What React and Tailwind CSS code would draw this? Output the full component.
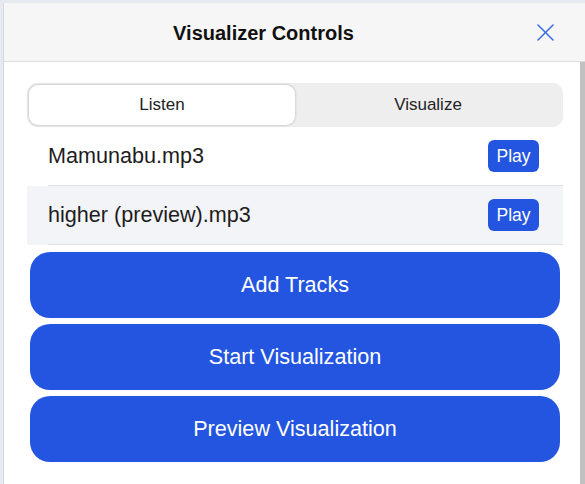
import React, { useState } from 'react';

const tracks = [
  { name: 'Mamunabu.mp3' },
  { name: 'higher (preview).mp3' },
];

function App() {
  const [tab, setTab] = useState('listen');
  const [hovered, setHovered] = useState(1);

  return (
    <div className="h-[484px] w-[585px] overflow-hidden bg-[#e7e9f1] pl-[3px] pt-[3px] font-['Liberation_Sans',Arial,sans-serif]">
      <div className="flex h-full flex-col border-l border-[#d6d8e0] bg-white">
        {/* Header */}
        <header className="flex h-[59px] shrink-0 items-center border-b border-[#dcdcdc] bg-[#f6f6f6] pl-[28px] pr-[31px]">
          <h1 className="flex-1 pt-[1px] text-center text-[20px] font-bold text-[#111]">Visualizer Controls</h1>
          <button className="ml-[41px] flex h-[18px] w-[18px] items-center justify-center text-[#3f6fe3]">
            <svg width="17" height="17" viewBox="0 0 17 17" fill="none" stroke="currentColor" strokeWidth="1.6" strokeLinecap="round">
              <line x1="1" y1="1" x2="16" y2="16" />
              <line x1="16" y1="1" x2="1" y2="16" />
            </svg>
          </button>
        </header>

        <div className="flex flex-1">
          <main className="flex-1 pl-[23px] pr-[17px] pt-[21px]">
            {/* Tabs */}
            <div className="flex h-[44px] rounded-[10px] bg-[#eeeeee] p-[2px]">
              <button
                onClick={() => setTab('listen')}
                className={`flex-1 rounded-[9px] text-[17px] text-[#222] ${tab === 'listen' ? 'bg-white shadow-[0_0_3px_rgba(0,0,0,0.25)]' : ''}`}
              >
                Listen
              </button>
              <button
                onClick={() => setTab('visualize')}
                className={`flex-1 rounded-[9px] text-[17px] text-[#222] ${tab === 'visualize' ? 'bg-white shadow-[0_0_3px_rgba(0,0,0,0.25)]' : ''}`}
              >
                Visualize
              </button>
            </div>

            {/* Track list */}
            <ul>
              {tracks.map((t, i) => (
                <li
                  key={t.name}
                  onMouseEnter={() => setHovered(i)}
                  className={`pl-[21px] ${hovered === i ? 'bg-[#f3f4f7]' : 'bg-white'}`}
                >
                  <div className="flex h-[59px] items-center justify-between border-b border-[#dedee3] pr-[24px]">
                    <span className="text-[21.6px] text-[#1d1d1d]">{t.name}</span>
                    <button className="h-[32px] w-[51px] rounded-[6px] bg-[#2355e0] text-[17.5px] text-white">Play</button>
                  </div>
                </li>
              ))}
            </ul>

            {/* Actions */}
            <div className="mt-[7px] flex flex-col gap-[6px] px-[3px]">
              <button className="h-[66px] rounded-[20px] bg-[#2355e0] pt-[1px] text-[21.6px] text-white">Add Tracks</button>
              <button className="h-[66px] rounded-[20px] bg-[#2355e0] pt-[1px] text-[21.6px] text-white">Start Visualization</button>
              <button className="h-[66px] rounded-[20px] bg-[#2355e0] pt-[1px] text-[21.6px] text-white">Preview Visualization</button>
            </div>
          </main>
          <div className="w-[5px] bg-[#c1c1c1]" />
        </div>
      </div>
    </div>
  );
}

export default App;
